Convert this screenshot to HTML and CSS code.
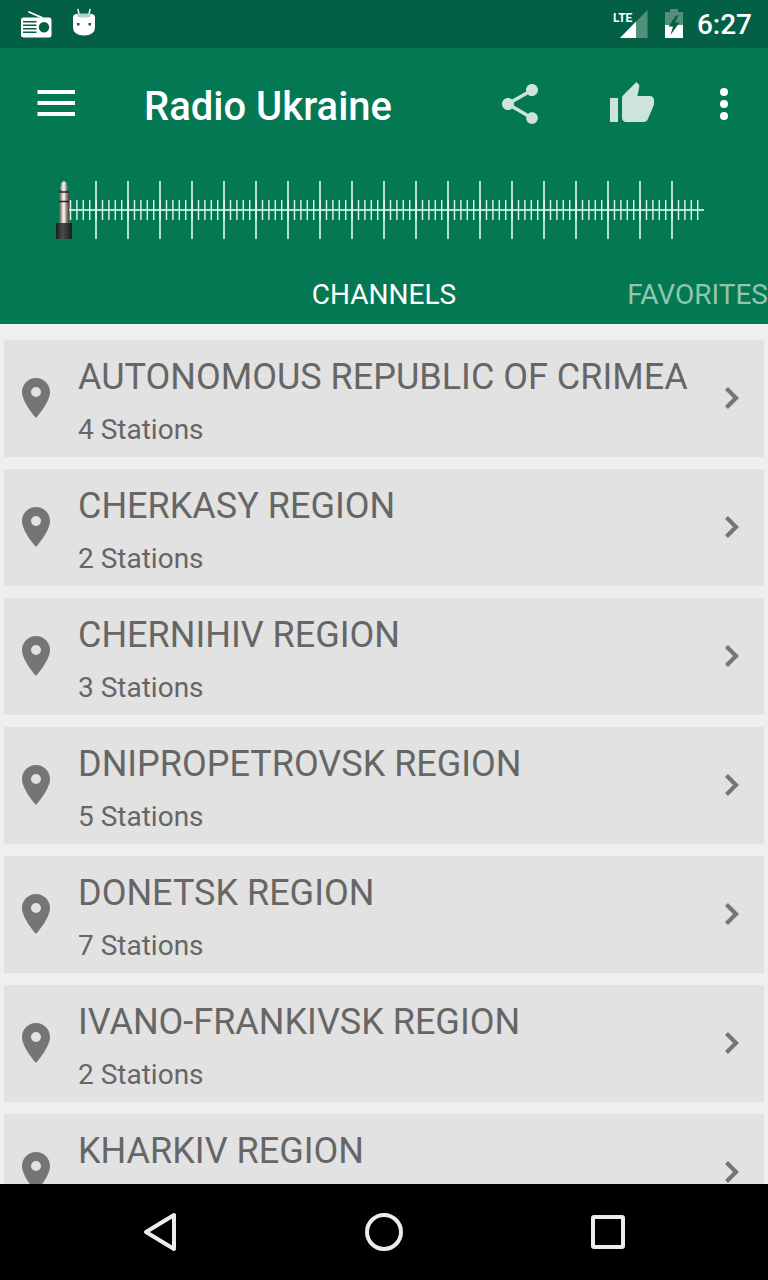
FILE: index.html
```
<!DOCTYPE html>
<html lang="en">
<head>
<meta charset="utf-8">
<meta name="viewport" content="width=device-width, initial-scale=1">
<title>Radio Ukraine</title>
<link rel="stylesheet" href="styles.css">
</head>
<body>
<svg class="sprite" aria-hidden="true">
  <symbol id="pin" viewBox="0 0 24 24"><path d="M12 2C8.130 2 5 5.130 5 9c0 5.250 7 13 7 13s7-7.750 7-13c0-3.870-3.130-7-7-7zm0 9.500a2.500 2.500 0 1 1 0-5 2.500 2.500 0 0 1 0 5z"/></symbol>
  <symbol id="chevron" viewBox="0 0 24 24"><path d="M6.500 2.500L16 12L6.500 21.500" fill="none" stroke="currentColor" stroke-width="4.200"/></symbol>
</svg>
<div class="screen">
  <div class="status">
    <svg class="status-radio" viewBox="0 0 32 32" fill="#fff" aria-hidden="true">
      <path d="M9 4L22.500 9.800" stroke="#fff" stroke-width="1.800" stroke-linecap="round"/>
      <path fill-rule="evenodd" d="M3.500 9.500H29a2.500 2.500 0 0 1 2.500 2.500V27A2.500 2.500 0 0 1 29 29.500H3.500A2.500 2.500 0 0 1 1 27V12A2.500 2.500 0 0 1 3.500 9.500zM3 13v1.500H16.500v-1.500zM3 16.500v1.500H16.500v-1.500zM3 20v1.500H16.500v-1.500zM3 23.500v1.500H16.500v-1.500zM24 14a5.200 5.200 0 1 0 0 10.400a5.200 5.200 0 0 0 0-10.400z"/>
    </svg>
    <svg class="status-droid" viewBox="0 0 24 32" aria-hidden="true">
      <path d="M6 1.500L7 6M18 1.500L17 6" stroke="#fff" stroke-width="1.400" stroke-linecap="round"/>
      <path d="M1 9.500Q1 6 5 6H19Q23 6 23 9.500V19Q23 27.500 12 27.500Q1 27.500 1 19z" fill="#fff"/>
      <path d="M5 5.500H19Q19 9.500 16 9.500H8Q5 9.500 5 5.500z" fill="#b5d0c5"/>
      <path d="M5 15h2.500v2.500H5zM16.500 15H19v2.500h-2.500z" fill="#036044"/>
    </svg>
    <svg class="status-signal" viewBox="0 0 40 32" role="img" aria-label="LTE signal">
      <path d="M35.500 2V30H8z" fill="#529079"/>
      <path d="M24 13.500V30H8z" fill="#fff"/>
      <text class="signal-label" x="1" y="14">LTE</text>
    </svg>
    <svg class="status-battery" viewBox="0 0 20 32" aria-hidden="true">
      <path d="M6 1H14V4H19V17H1V4H6z" fill="#529079"/>
      <path d="M1 17H19V30H1z" fill="#fff"/>
      <path d="M12 7.500L4.500 18.500H9L6.500 27L15.500 14.500H11L14.500 7.500z" fill="#036044"/>
    </svg>
    <span class="time">6:27</span>
  </div>
  <header class="header">
    <div class="toolbar">
      <button class="icon-button" aria-label="Open menu"><svg viewBox="0 0 48 48"><path d="M5.500 12H43M5.500 23H43M5.500 34H43" stroke="#fff" stroke-width="4"/></svg></button>
      <h1 class="title">Radio Ukraine</h1>
      <button class="icon-button soft" aria-label="Share"><svg viewBox="0 0 24 24" fill="currentColor"><path d="M18 16.080c-.760 0-1.440.300-1.960.770L8.910 12.700c.050-.230.090-.460.090-.700s-.040-.470-.090-.700l7.050-4.110c.540.500 1.250.810 2.040.810 1.660 0 3-1.340 3-3s-1.340-3-3-3-3 1.340-3 3c0 .240.040.470.090.700L8.040 9.810C7.500 9.310 6.790 9 6 9c-1.660 0-3 1.340-3 3s1.340 3 3 3c.790 0 1.500-.310 2.040-.810l7.120 4.160c-.050.210-.080.430-.080.650 0 1.610 1.310 2.920 2.920 2.920s2.920-1.310 2.920-2.920-1.310-2.920-2.920-2.920z"/></svg></button>
      <button class="icon-button like soft" aria-label="Like"><svg viewBox="0 0 24 24" fill="currentColor"><path d="M1 21h4V9H1v12zm22-11c0-1.100-.900-2-2-2h-6.310l.950-4.570.030-.320c0-.410-.170-.790-.440-1.060L14.170 1 7.590 7.590C7.220 7.950 7 8.450 7 9v10c0 1.100.900 2 2 2h9c.830 0 1.540-.500 1.840-1.220l3.020-7.050c.090-.230.140-.470.140-.730v-2z"/></svg></button>
      <button class="icon-button more" aria-label="More options"><svg viewBox="0 0 24 24" fill="currentColor"><circle cx="12" cy="6" r="2"/><circle cx="12" cy="12" r="2"/><circle cx="12" cy="18" r="2"/></svg></button>
    </div>
    <svg class="dial" viewBox="0 0 648 60" role="img" aria-label="Tuning dial">
      <defs>
        <linearGradient id="metal"><stop offset="0" stop-color="#54453f"/><stop offset=".3" stop-color="#c9bdb6"/><stop offset=".5" stop-color="#fff"/><stop offset=".7" stop-color="#a3958d"/><stop offset="1" stop-color="#4c403b"/></linearGradient>
        <linearGradient id="grip"><stop offset="0" stop-color="#1c1c1c"/><stop offset=".4" stop-color="#4b4b4b"/><stop offset="1" stop-color="#1d1d1d"/></linearGradient>
      </defs>
      <path d="M8 30H648" stroke="#a9e5cd" stroke-width="2"/>
      <path d="M13.800 30H646" stroke="#dcf8ee" stroke-width="20" stroke-dasharray="1.400 5"/>
      <path d="M39.200 30H640" stroke="#dcf8ee" stroke-width="58" stroke-dasharray="1.600 30.400"/>
      <path d="M8 1L11 3V5L12.500 8L10.500 11H13V43H3V11H5.500L3.500 8L5 5V3z" fill="url(#metal)"/>
      <path d="M3 12H13M3 21.500H13" stroke="#222" stroke-width="1.500"/>
      <path d="M0 43H16V59H0z" fill="url(#grip)"/>
    </svg>
    <nav class="tabs">
      <a class="tab" href="#channels" aria-current="page">CHANNELS</a>
      <a class="tab next" href="#favorites">FAVORITES</a>
    </nav>
  </header>
  <main class="list" id="channels">
    <a class="row" href="#crimea"><svg class="pin"><use href="#pin"/></svg><span class="text"><span class="name">AUTONOMOUS REPUBLIC OF CRIMEA</span><span class="count">4 Stations</span></span><svg class="chevron"><use href="#chevron"/></svg></a>
    <a class="row" href="#cherkasy"><svg class="pin"><use href="#pin"/></svg><span class="text"><span class="name">CHERKASY REGION</span><span class="count">2 Stations</span></span><svg class="chevron"><use href="#chevron"/></svg></a>
    <a class="row" href="#chernihiv"><svg class="pin"><use href="#pin"/></svg><span class="text"><span class="name">CHERNIHIV REGION</span><span class="count">3 Stations</span></span><svg class="chevron"><use href="#chevron"/></svg></a>
    <a class="row" href="#dnipropetrovsk"><svg class="pin"><use href="#pin"/></svg><span class="text"><span class="name">DNIPROPETROVSK REGION</span><span class="count">5 Stations</span></span><svg class="chevron"><use href="#chevron"/></svg></a>
    <a class="row" href="#donetsk"><svg class="pin"><use href="#pin"/></svg><span class="text"><span class="name">DONETSK REGION</span><span class="count">7 Stations</span></span><svg class="chevron"><use href="#chevron"/></svg></a>
    <a class="row" href="#ivano-frankivsk"><svg class="pin"><use href="#pin"/></svg><span class="text"><span class="name">IVANO-FRANKIVSK REGION</span><span class="count">2 Stations</span></span><svg class="chevron"><use href="#chevron"/></svg></a>
    <a class="row" href="#kharkiv"><svg class="pin"><use href="#pin"/></svg><span class="text"><span class="name">KHARKIV REGION</span></span><svg class="chevron"><use href="#chevron"/></svg></a>
  </main>
  <nav class="system-nav">
    <button class="icon-button" aria-label="Back"><svg viewBox="0 0 48 48"><path d="M38 7V41L10 24z"/></svg></button>
    <button class="icon-button" aria-label="Home"><svg viewBox="0 0 48 48"><circle cx="24" cy="24" r="17"/></svg></button>
    <button class="icon-button" aria-label="Recent apps"><svg viewBox="0 0 48 48"><rect x="9" y="9" width="30" height="30" rx="1"/></svg></button>
  </nav>
</div>
</body>
</html>
```
FILE: styles.css
```
* { box-sizing: border-box; }
body {
  margin: 0;
  font-family: Roboto, "Noto Sans", sans-serif;
  background: #efefef;
}
svg { display: block; }
a { color: inherit; text-decoration: none; }
.sprite { position: absolute; width: 0; height: 0; }
.screen { display: flex; flex-direction: column; height: 100vh; overflow: hidden; }

.status {
  display: flex;
  align-items: center;
  flex: none;
  height: 48px;
  padding: 0 16px 0 20px;
  background: #036044;
  color: #fff;
}
.status-radio { width: 32px; height: 32px; margin-right: 20px; }
.status-droid { width: 24px; height: 32px; margin-right: auto; }
.status-signal { width: 40px; height: 32px; margin-right: 12px; }
.signal-label { fill: #fff; font-family: "Liberation Sans Narrow", Roboto, sans-serif; font-size: 12px; font-weight: 700; }
.status-battery { width: 20px; height: 32px; margin-right: 13px; }
.time { font-size: 28px; font-weight: 500; line-height: 32px; padding-top: 2px; }

.header { flex: none; background: #047852; color: #fff; }
.toolbar { display: flex; align-items: center; height: 112px; padding: 0 20px 0 32px; }
.icon-button {
  flex: none;
  width: 48px;
  height: 48px;
  padding: 0;
  border: 0;
  background: none;
  color: #fff;
}
.icon-button svg { width: 48px; height: 48px; }
.soft { color: #cde4dc; }
.title { flex: 1; margin: 0; padding: 6px 0 0 64px; font-size: 40px; font-weight: 500; line-height: 48px; }
.like { margin: 0 44px 0 64px; }
.dial { width: 100%; height: auto; padding: 0 64px 0 56px; margin-top: 20px; }
.tabs { display: grid; grid-template-columns: 1fr auto 1fr; padding: 31px 0 5px; font-size: 28px; line-height: 48px; }
.tab { grid-column: 2; }
.next { grid-column: 3; justify-self: end; color: #8fc6b0; }

.list { flex: 1; min-height: 0; overflow: hidden; display: flex; flex-direction: column; gap: 12px; padding: 16px 4px 0; }
.row {
  display: flex;
  flex: none;
  align-items: center;
  min-height: 117px;
  padding: 0 20px 1px 8px;
  background: #e2e2e2;
  color: #666;
}
.pin { width: 48px; height: 48px; fill: #757575; }
.text { display: flex; flex: 1; flex-direction: column; align-self: flex-start; gap: 12px; min-width: 0; padding: 12px 0 10px 18px; }
.name { font-size: 36px; line-height: 50px; white-space: nowrap; }
.count { font-size: 28px; line-height: 32px; }
.chevron { width: 24px; height: 24px; color: #757575; }

.system-nav { display: flex; flex: none; align-items: center; justify-content: center; gap: 176px; height: 96px; background: #000; }
.system-nav svg { fill: none; stroke: #ececec; stroke-width: 4; stroke-linejoin: round; }
```
